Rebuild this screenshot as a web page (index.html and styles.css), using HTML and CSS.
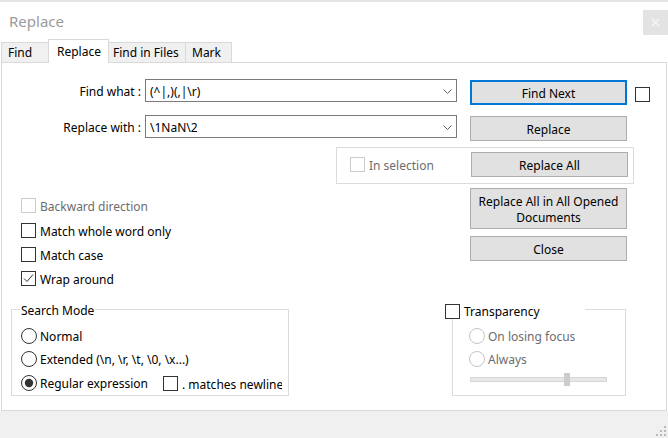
FILE: index.html
```html
<!DOCTYPE html>
<html>
<head>
<meta charset="utf-8">
<title>Replace</title>
<link rel="stylesheet" href="styles.css">
</head>
<body>
<div class="window">
  <div class="topstrip"></div>
  <div class="titlebar">
    <span class="title">Replace</span>
    <div class="close-btn"><svg width="9" height="9" viewBox="0 0 9 9"><path d="M1 1L8 8M8 1L1 8" stroke="#f6f6f6" stroke-width="1.3" fill="none"/></svg></div>
  </div>
  <div class="tabs">
    <div class="tab tab-find">Find</div>
    <div class="tab tab-active">Replace</div>
    <div class="tab tab-files">Find in Files</div>
    <div class="tab tab-mark">Mark</div>
  </div>
  <div class="panel">
    <div class="row row-find">
      <span class="field-label">Find what :</span>
      <div class="combo"><span class="combo-text">(^|,)(,|\r)</span><svg class="chev" width="9" height="5" viewBox="0 0 9 5"><polyline points="0.5,0.5 4.5,4.5 8.5,0.5" fill="none" stroke="#606060" stroke-width="1"/></svg></div>
      <div class="btn btn-default">Find Next</div>
      <span class="checkbox side-check"></span>
    </div>
    <div class="row row-replace">
      <span class="field-label">Replace with :</span>
      <div class="combo"><span class="combo-text">\1NaN\2</span><svg class="chev" width="9" height="5" viewBox="0 0 9 5"><polyline points="0.5,0.5 4.5,4.5 8.5,0.5" fill="none" stroke="#606060" stroke-width="1"/></svg></div>
      <div class="btn">Replace</div>
    </div>
    <div class="row row-sel">
      <div class="sel-group">
        <span class="checkbox disabled"></span>
        <span class="sel-label">In selection</span>
        <div class="btn sel-btn">Replace All</div>
      </div>
    </div>
    <div class="middle">
      <div class="options">
        <div class="opt opt-first"><span class="checkbox disabled"></span><span class="opt-text disabled-text">Backward direction</span></div>
        <div class="opt"><span class="checkbox"></span><span class="opt-text">Match whole word only</span></div>
        <div class="opt"><span class="checkbox"></span><span class="opt-text">Match case</span></div>
        <div class="opt"><span class="checkbox"><svg width="13" height="13" viewBox="0 0 13 13"><polyline points="2,6.5 5,9.5 11,2.5" fill="none" stroke="#333" stroke-width="1"/></svg></span><span class="opt-text">Wrap around</span></div>
      </div>
      <div class="side-buttons">
        <div class="btn btn-tall">Replace All in All Opened<br>Documents</div>
        <div class="btn btn-close">Close</div>
      </div>
    </div>
    <div class="bottom">
      <div class="group search-group">
        <div class="legend search-legend">Search Mode</div>
        <div class="radio-row r-first"><svg class="radio" width="16" height="16" viewBox="0 0 16 16"><circle cx="8" cy="8" r="7.5" fill="#fff" stroke="#333"/></svg><span class="radio-text">Normal</span></div>
        <div class="radio-row r-second"><svg class="radio" width="16" height="16" viewBox="0 0 16 16"><circle cx="8" cy="8" r="7.5" fill="#fff" stroke="#333"/></svg><span class="radio-text">Extended (\n, \r, \t, \0, \x...)</span></div>
        <div class="radio-row r-third"><svg class="radio" width="16" height="16" viewBox="0 0 16 16"><circle cx="8" cy="8" r="7.5" fill="#fff" stroke="#333"/><circle cx="8" cy="8" r="4.2" fill="#333"/></svg><span class="radio-text regex-text">Regular expression</span><span class="checkbox"></span><span class="newline-text">. matches newline</span></div>
      </div>
      <div class="group trans-group">
        <div class="legend trans-legend"><span class="checkbox"></span><span class="trans-text">Transparency</span></div>
        <div class="radio-row t-first"><svg class="radio" width="16" height="16" viewBox="0 0 16 16"><circle cx="8" cy="8" r="7.5" fill="#fff" stroke="#c4c4c4"/></svg><span class="radio-text disabled-text">On losing focus</span></div>
        <div class="radio-row t-second"><svg class="radio" width="16" height="16" viewBox="0 0 16 16"><circle cx="8" cy="8" r="7.5" fill="#fff" stroke="#c4c4c4"/></svg><span class="radio-text disabled-text">Always</span></div>
        <div class="slider"><div class="track"><div class="thumb"></div></div></div>
      </div>
    </div>
  </div>
  <div class="footer">
    <svg class="grip" width="10" height="10" viewBox="0 0 10 10"><g fill="#b9b9b9"><rect x="8" y="0" width="2" height="2"/><rect x="4" y="4" width="2" height="2"/><rect x="8" y="4" width="2" height="2"/><rect x="0" y="8" width="2" height="2"/><rect x="4" y="8" width="2" height="2"/><rect x="8" y="8" width="2" height="2"/></g></svg>
  </div>
</div>
</body>
</html>
```
FILE: styles.css
```css
* { box-sizing: border-box; }
html, body { margin: 0; padding: 0; }
body {
  background: #fff;
  font-family: "Noto Sans", "Open Sans", sans-serif;
  font-size: 12px;
  color: #000;
}
.window {
  width: 668px;
  height: 438px;
  display: flex;
  flex-direction: column;
  overflow: hidden;
}
.topstrip { height: 2px; background: #e3e3e3; flex: none; }
.titlebar {
  height: 37px;
  flex: none;
  display: flex;
  justify-content: space-between;
  align-items: flex-start;
}
.title {
  font-size: 15px;
  line-height: 20px;
  color: #9b9b9b;
  margin: 9px 0 0 9px;
}
.close-btn {
  width: 25px;
  height: 25px;
  margin-top: 8px;
  background: #e3e3e3;
  display: flex;
  align-items: center;
  justify-content: center;
}
.tabs {
  height: 23px;
  flex: none;
  display: flex;
  align-items: flex-end;
  padding-left: 1px;
}
.tab {
  height: 20px;
  line-height: 18px;
  padding-top: 1px;
  background: #f0f0f0;
  border: 1px solid #d9d9d9;
  border-bottom: none;
  white-space: nowrap;
}
.tab-find { width: 47px; padding-left: 6px; border-right: none; }
.tab-active {
  width: 61px;
  height: 24px;
  padding-left: 8px;
  line-height: 21px;
  background: #fff;
  margin-bottom: -1px;
  position: relative;
  z-index: 1;
}
.tab-files { width: 77px; padding-left: 4px; border-left: none; }
.tab-mark { width: 46px; padding-left: 6px; border-left: none; }
.panel {
  flex: none;
  height: 349px;
  margin: 0 1px;
  border: 1px solid #d9d9d9;
  display: flex;
  flex-direction: column;
}
.row { display: flex; align-items: flex-start; flex: none; }
.row-find { margin-top: 16px; height: 36px; }
.row-replace { height: 32px; }
.row-sel { height: 37px; }
.field-label {
  width: 139px;
  margin-right: 4px;
  height: 23px;
  line-height: 23px;
  padding-top: 1px;
  text-align: right;
  white-space: nowrap;
}
.combo {
  width: 312px;
  height: 23px;
  border: 1px solid #7a7a7a;
  padding: 0 4px 0 4px;
  display: flex;
  align-items: center;
  justify-content: space-between;
  background: #fff;
}
.combo-text { white-space: nowrap; margin-top: 2px; }
.chev { margin-top: 1px; }
.btn {
  width: 157px;
  height: 25px;
  background: #e1e1e1;
  border: 1px solid #adadad;
  display: flex;
  align-items: center;
  justify-content: center;
  text-align: center;
  line-height: 16px;
  padding-top: 2px;
  flex: none;
}
.row-find .btn, .row-replace .btn { margin-left: 13px; margin-top: 1px; }
.btn-default { border: 2px solid #0078d7; }
.checkbox {
  width: 15px;
  height: 15px;
  border: 1px solid #333;
  background: #fff;
  flex: none;
  display: flex;
  align-items: center;
  justify-content: center;
}
.checkbox.disabled { border-color: #cccccc; }
.side-check { margin-left: 8px; margin-top: 8px; }
.sel-group {
  margin-left: 334px;
  width: 298px;
  height: 37px;
  border: 1px solid #dcdcdc;
  display: flex;
  align-items: center;
  padding: 4px 5px 6px 13px;
}
.sel-label { margin-left: 4px; margin-top: 2px; color: #6d6d6d; white-space: nowrap; }
.sel-btn { margin-left: auto; }
.middle { display: flex; height: 125px; flex: none; }
.options {
  width: 468px;
  padding: 14px 0 0 19px;
  display: flex;
  flex-direction: column;
}
.opt { display: flex; align-items: center; height: 15px; margin-top: 9px; }
.opt-first { margin-top: 0; margin-bottom: 1px; }
.opt-text { margin-left: 4px; margin-top: 2px; white-space: nowrap; line-height: 16px; }
.disabled-text { color: #6d6d6d; }
.side-buttons { padding-top: 4px; display: flex; flex-direction: column; }
.btn-tall { height: 41px; }
.btn-close { margin-top: 7px; }
.bottom { display: flex; align-items: flex-start; flex: none; }
.group {
  height: 87px;
  border: 1px solid #dcdcdc;
  display: flex;
  flex-direction: column;
  align-items: flex-start;
}
.search-group { margin-left: 9px; width: 278px; padding-left: 9px; }
.trans-group { margin-left: 163px; width: 174px; padding-left: 16px; }
.legend {
  height: 16px;
  line-height: 16px;
  background: #fff;
  white-space: nowrap;
  display: flex;
  align-items: center;
}
.search-legend { margin-top: -8px; margin-left: -1px; padding: 1px 1px 0; }
.trans-legend { margin-top: -7px; margin-left: -24px; width: 140px; }
.trans-text { margin-left: 4px; margin-top: 2px; }
.radio-row { display: flex; align-items: center; height: 16px; white-space: nowrap; }
.radio { flex: none; }
.radio-text { margin-left: 3px; margin-top: 2px; line-height: 16px; }
.r-first { margin-top: 10px; }
.r-second { margin-top: 7px; }
.r-third { margin-top: 8px; }
.regex-text { width: 123px; }
.newline-text { margin-left: 4px; margin-top: 2px; width: 100px; overflow: hidden; }
.t-first { margin-top: 9px; }
.t-second { margin-top: 7px; }
.slider { margin-top: 6px; margin-left: 1px; height: 14px; padding-top: 4px; }
.track {
  width: 137px;
  height: 5px;
  background: #e7e7e7;
  border: 1px solid #d6d6d6;
  position: relative;
}
.thumb {
  position: absolute;
  left: 93px;
  top: -5px;
  width: 6px;
  height: 13px;
  background: #cccccc;
}
.footer {
  flex: 1;
  background: #f0f0f0;
  display: flex;
  justify-content: flex-end;
  align-items: flex-end;
}
.grip { margin: 0 2px 2px 0; }
```
